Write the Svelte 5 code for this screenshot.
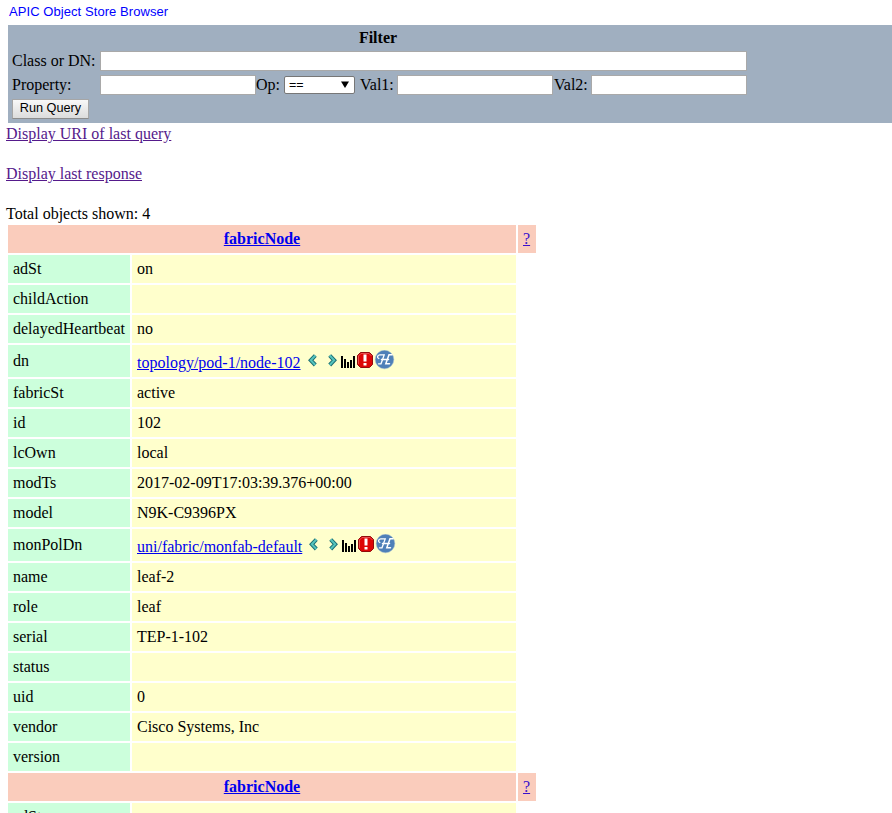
<script>
  const rows = [
    ['adSt', 'on'],
    ['childAction', ''],
    ['delayedHeartbeat', 'no'],
    ['dn', 'topology/pod-1/node-102', true],
    ['fabricSt', 'active'],
    ['id', '102'],
    ['lcOwn', 'local'],
    ['modTs', '2017-02-09T17:03:39.376+00:00'],
    ['model', 'N9K-C9396PX'],
    ['monPolDn', 'uni/fabric/monfab-default', true],
    ['name', 'leaf-2'],
    ['role', 'leaf'],
    ['serial', 'TEP-1-102'],
    ['status', ''],
    ['uid', '0'],
    ['vendor', 'Cisco Systems, Inc'],
    ['version', '']
  ];
  // The second object starts below the fold; only its first property row begins to show.
  const objects = [rows, [['adSt', '']]];
</script>

{#snippet icons()}
  <svg class="icons" width="90" height="20" viewBox="0 0 90 20">
    <g fill="none" stroke-linejoin="miter">
      <path d="M9.300 5.500 4.800 10.300 9.300 15" stroke="#1b6c72" stroke-width="4" />
      <path d="M9.300 5.500 4.800 10.300 9.300 15" stroke="#55c4bd" stroke-width="2" />
      <path d="M23.700 5.500 28.200 10.300 23.700 15" stroke="#1b6c72" stroke-width="4" />
      <path d="M23.700 5.500 28.200 10.300 23.700 15" stroke="#55c4bd" stroke-width="2" />
    </g>
    <path d="M35 6h2v12h-2zM38 9h2v9h-2zM41 12h2v6h-2zM44 10h2v8h-2zM47 6h2v12h-2z" fill="#000" />
    <path d="M54.500 2.500h9l3 3v9l-3 3h-9l-3-3v-9z" fill="#dd0606" stroke="#920b0b" />
    <path d="M52.500 14V6l2.500-2.500h8L65.500 6" fill="none" stroke="#ee6060" stroke-width=".8" />
    <path d="M57.500 4.500h3v7h-3zM57.500 13h3v2.500h-3z" fill="#fff" />
    <circle cx="78.500" cy="9.500" r="9.300" fill="#4f80b8" stroke="#9db8cf" stroke-width=".5" />
    <g fill="none" stroke="#fff" stroke-linecap="round">
      <path d="M72.800 8.500c-2-.8-1.500-3.300 1-3.600h4.400L75 13.800h-2.500" stroke-width="1.300" />
      <path d="M86 4.800h-3L79.800 13.800h3.700M75.500 9.500h7" stroke-width="1.500" />
    </g>
  </svg>
{/snippet}

<div class="page">
  <a class="title" href="#top">APIC Object Store Browser</a>

  <form class="filter" onsubmit={(e) => e.preventDefault()}>
    <div class="heading">Filter</div>
    <div class="line">
      <label class="first" for="cls">Class or DN:</label>
      <input id="cls" class="wide" />
    </div>
    <div class="line">
      <label class="first" for="prop">Property:</label>
      <input id="prop" />
      <label class="op" for="op">Op:</label>
      <button type="button" id="op" class="select"><span>==</span><svg width="8" height="7"><path d="M0 .5h8L4 7z" /></svg></button>
      <label class="val1" for="val1">Val1:</label>
      <input id="val1" />
      <label class="val2" for="val2">Val2:</label>
      <input id="val2" />
    </div>
    <button class="run">Run Query</button>
  </form>

  <div class="links">
    <a href="#uri">Display URI of last query</a>
    <a href="#response">Display last response</a>
    <div>Total objects shown: 4</div>
  </div>

  <div class="table">
    {#each objects as object}
      <div class="class-name"><a href="#class">fabricNode</a></div>
      <div class="help"><a href="#help">?</a></div>
      {#each object as [key, value, linked]}
        <div class="key" class:tall={linked}>{key}</div>
        <div class="value" class:tall={linked}>
          {#if linked}<a href="#dn">{value}</a>{@render icons()}{:else}{value}{/if}
        </div>
      {/each}
    {/each}
  </div>
</div>

<style>
  :global(body) { overflow: hidden; background: #fff; }
  .page {
    height: 813px;
    overflow: hidden;
    box-sizing: border-box;
    padding-top: 3px;
    font: 16px/18px "Liberation Serif", "Times New Roman", serif;
    color: #000;
  }
  .title {
    display: block;
    height: 22px;
    padding-left: 9px;
    font: 13px/17px "Liberation Sans", Arial, sans-serif;
    letter-spacing: 0.07px;
    color: #00f;
    text-decoration: none;
  }
  .filter {
    height: 98px;
    box-sizing: border-box;
    margin-left: 8px;
    padding: 4px 4px 0;
    background: #a0afc0;
  }
  .heading { width: 732px; height: 18px; text-align: center; font-weight: bold; }
  .line { display: flex; align-items: center; height: 20px; margin-top: 4px; white-space: nowrap; }
  label { flex: none; }
  .first { width: 88px; }
  input {
    flex: none;
    box-sizing: border-box;
    width: 156px;
    height: 20px;
    margin: 0;
    padding: 1px;
    border: 1px solid #a9a9a9;
    background: #fff;
  }
  .wide { width: 647px; }
  .op { width: 28px; }
  .val1 { width: 37px; margin-left: 5px; }
  .val2 { width: 37px; padding-left: 1px; }
  .select {
    display: flex;
    justify-content: space-between;
    align-items: center;
    box-sizing: border-box;
    width: 71px;
    height: 18px;
    padding: 0 5px 1px 4px;
    border: 1px solid #777;
    border-radius: 2px;
    background: #fff;
    font: 12.5px/14px "Liberation Sans", Arial, sans-serif;
    color: #000;
  }
  .run {
    display: block;
    box-sizing: border-box;
    width: 77px;
    height: 20px;
    margin: 4px 0 0;
    padding: 0 0 2px;
    border: 1px solid #a6a6a6;
    border-bottom-color: #8c8c8c;
    background: linear-gradient(#f8f8f8, #dcdcdc);
    font: 12.7px/16px "Liberation Sans", Arial, sans-serif;
    color: #000;
  }
  .links { height: 102px; box-sizing: border-box; padding: 1px 0 0 6px; line-height: 20px; }
  .links a { display: block; width: max-content; margin-bottom: 20px; color: #551a8b; }
  .table {
    display: grid;
    grid-template-columns: 122px 384px 18px;
    gap: 2px;
    margin-left: 8px;
    white-space: nowrap;
  }
  .table > div { height: 28px; box-sizing: border-box; padding: 5px; }
  .table > .tall { height: 32px; line-height: 22px; }
  .table > .value.tall { display: flex; padding-top: 7px; }
  .class-name { grid-column: 1 / 3; text-align: center; font-weight: bold; background: #faccbc; }
  .help { background: #faccbc; }
  .key { grid-column: 1; background: #ccffdc; }
  .value { background: #ffffcc; }
  .table a { color: #00e; }
  .help a { color: #3a10cc; }
  .icons { flex: none; margin: -2px 0 0 5px; }
</style>
